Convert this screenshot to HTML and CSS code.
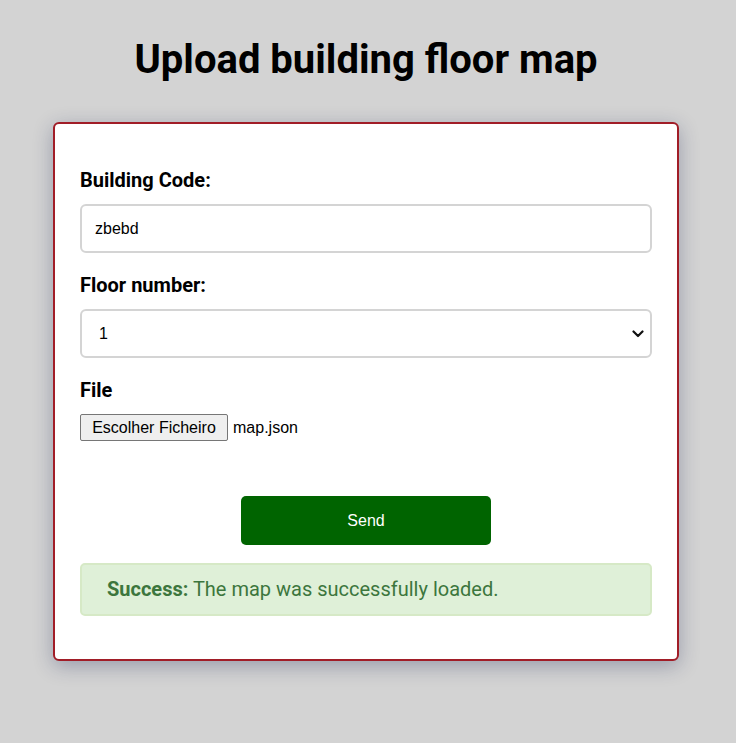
FILE: index.html
```html
<!DOCTYPE html>
<html lang="en">
<head>
<meta charset="utf-8">
<title>Upload building floor map</title>
<link rel="stylesheet" href="styles.css">
</head>
<body>
<main class="page">
  <h1 class="title">Upload building floor map</h1>
  <form class="card">
    <div class="group">
      <label class="label" for="code">Building Code:</label>
      <input class="field" id="code" type="text" value="zbebd">
    </div>
    <div class="group">
      <label class="label" for="floor">Floor number:</label>
      <div class="select-wrap">
        <select class="field select" id="floor">
          <option>1</option>
        </select>
        <svg class="chevron" width="12" height="8" viewBox="0 0 12 8" aria-hidden="true"><path d="M1.5 1.5 L6 6 L10.5 1.5" fill="none" stroke="#111" stroke-width="2.2" stroke-linecap="round" stroke-linejoin="round"/></svg>
      </div>
    </div>
    <div class="group group-file">
      <span class="label">File</span>
      <div class="file">
        <button type="button" class="file-btn">Escolher Ficheiro</button>
        <span class="file-name">map.json</span>
      </div>
    </div>
    <div class="actions">
      <button type="button" class="send">Send</button>
    </div>
    <div class="alert"><strong>Success:</strong> The map was successfully loaded.</div>
  </form>
</main>
</body>
</html>
```

FILE: styles.css
```css
* { box-sizing: border-box; }

html, body {
  margin: 0;
  padding: 0;
}

body {
  background: #d3d3d3;
  font-family: Roboto, "Liberation Sans", Arial, sans-serif;
  color: #000;
  padding-right: 4px;
}

.page {
  display: flex;
  flex-direction: column;
  align-items: center;
  padding-bottom: 60px;
}

.title {
  margin: 36px 0 39px;
  font-family: Roboto, sans-serif;
  font-weight: 700;
  font-size: 40px;
  line-height: 47px;
}

.card {
  width: 626px;
  background: #fff;
  border: 2px solid #a11d27;
  border-radius: 6px;
  padding: 45px 25px 43px;
  box-shadow: 0 5px 20px rgba(20, 30, 80, 0.3);
}

.group {
  margin-bottom: 21px;
}

.label {
  display: block;
  font-family: Roboto, sans-serif;
  font-weight: 700;
  font-size: 20px;
  line-height: 23px;
  margin-bottom: 12px;
}

.field {
  display: block;
  width: 100%;
  height: 49px;
  border: 2px solid #d4d4d4;
  border-radius: 6px;
  padding: 0 13px;
  font-family: Arial, "Liberation Sans", sans-serif;
  font-size: 16px;
  color: #000;
  background: #fff;
  outline: none;
}

.select-wrap {
  position: relative;
}

.select {
  appearance: none;
  -webkit-appearance: none;
  padding-left: 17px;
}

.chevron {
  position: absolute;
  right: 8px;
  top: 21px;
  pointer-events: none;
}

.group-file {
  margin-bottom: 55px;
}

.file {
  display: flex;
  align-items: center;
  gap: 5px;
  height: 27px;
}

.file-btn {
  height: 27px;
  width: 148px;
  padding: 0;
  background: #efefef;
  border: 1px solid #767676;
  border-radius: 2px;
  font-family: Arial, "Liberation Sans", sans-serif;
  font-size: 16px;
  color: #000;
}

.file-name {
  font-family: Arial, "Liberation Sans", sans-serif;
  font-size: 16px;
}

.actions {
  display: flex;
  justify-content: center;
}

.send {
  width: 250px;
  height: 49px;
  background: #006400;
  color: #fff;
  border: none;
  border-radius: 5px;
  font-family: Arial, "Liberation Sans", sans-serif;
  font-size: 16px;
}

.alert {
  margin-top: 18px;
  background: #dff0d8;
  border: 2px solid #d6e9c6;
  border-radius: 5px;
  padding: 13px 25px;
  font-family: Roboto, sans-serif;
  font-size: 20px;
  line-height: 23px;
  color: #3c763d;
}

.alert strong {
  font-weight: 700;
}
```
